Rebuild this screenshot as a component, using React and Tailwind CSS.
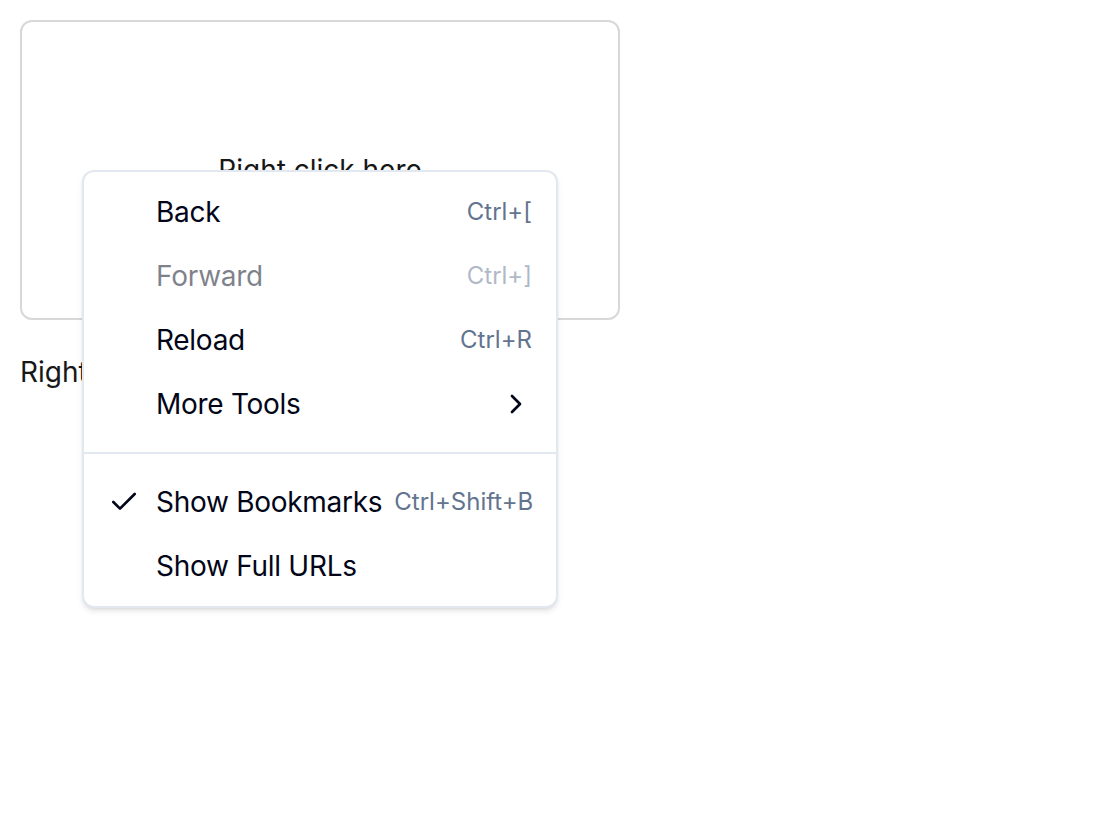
import React from "react";
import { Check, ChevronRight } from "lucide-react";

const MenuItem = ({ label, shortcut, disabled, checked, submenu }) => (
  <div
    className={`relative flex h-16 items-center whitespace-nowrap rounded-xl pl-16 pr-4 ${
      disabled ? "opacity-50" : ""
    }`}
  >
    {checked && (
      <span className="absolute left-4 flex h-8 w-8 items-center justify-center">
        <Check size={32} strokeWidth={2} />
      </span>
    )}
    <span className="tracking-[-0.01em]">{label}</span>
    {shortcut && (
      <span className="ml-auto pl-3 text-[24px] text-slate-500">{shortcut}</span>
    )}
    {submenu && <ChevronRight size={32} strokeWidth={2} className="ml-auto" />}
  </div>
);

const App = () => {
  return (
    <div className="relative min-h-[840px] bg-white p-5 font-['Inter',sans-serif] text-[28px] leading-10 text-neutral-900">
      <div className="flex h-[300px] w-[600px] items-center justify-center rounded-xl border-2 border-[#d8d8d8]">
        Right click here
      </div>
      <p className="mt-8">Right click the box</p>

      <div className="absolute left-[82px] top-[170px] w-[476px] rounded-xl border-2 border-slate-200 bg-white p-2 text-slate-950 shadow-md">
        <MenuItem label="Back" shortcut="Ctrl+[" />
        <MenuItem label="Forward" shortcut="Ctrl+]" disabled />
        <MenuItem label="Reload" shortcut="Ctrl+R" />
        <MenuItem label="More Tools" submenu />
        <div className="-mx-2 my-4 h-[2px] bg-slate-200" />
        <MenuItem label="Show Bookmarks" shortcut="Ctrl+Shift+B" checked />
        <MenuItem label="Show Full URLs" />
      </div>
    </div>
  );
};

export default App;
